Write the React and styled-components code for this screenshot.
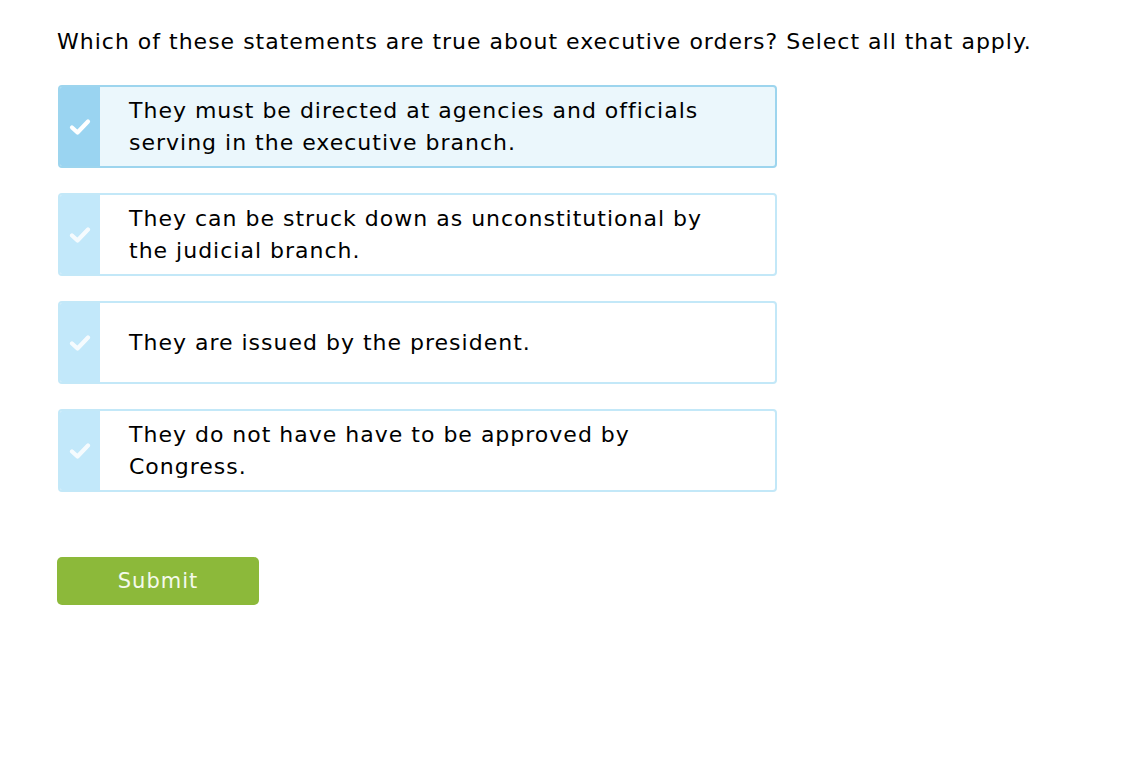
import React, { useState } from 'react';
import styled, { createGlobalStyle } from 'styled-components';

const GlobalStyle = createGlobalStyle`
  body {
    margin: 0;
    background: #fff;
    font-family: Verdana, "DejaVu Sans", sans-serif;
    color: #000;
  }
`;

const Page = styled.div`
  padding: 26px 0 0 57px;
`;

const Question = styled.h1`
  margin: 0 0 27px;
  font-size: 22px;
  letter-spacing: 1px;
  font-weight: normal;
  line-height: 32px;
`;

const List = styled.div`
  display: flex;
  flex-direction: column;
  gap: 25px;
  width: 719px;
  margin-left: 1px;
`;

const Choice = styled.div`
  display: flex;
  min-height: 83px;
  box-sizing: border-box;
  border: 2px solid ${p => (p.$selected ? '#9dd5ee' : '#c3e8f8')};
  border-radius: 4px;
  background: ${p => (p.$selected ? '#ebf7fc' : '#fff')};
  cursor: pointer;
  overflow: hidden;
`;

const Strip = styled.div`
  width: 40px;
  flex: none;
  display: flex;
  align-items: center;
  justify-content: center;
  background: ${p => (p.$selected ? '#9ad4f1' : '#c2e8fa')};
`;

const Label = styled.div`
  flex: 1;
  display: flex;
  align-items: center;
  padding: 6px 40px 6px 29px;
  font-size: 22px;
  letter-spacing: 1px;
  line-height: 32px;
`;

const SubmitButton = styled.button`
  margin-top: 65px;
  width: 202px;
  height: 48px;
  border: none;
  border-radius: 5px;
  background: #8cb93a;
  color: #f4f9ec;
  font-family: Verdana, "DejaVu Sans", sans-serif;
  font-size: 21px;
  letter-spacing: 1px;
  cursor: pointer;
`;

function Check({ faded }) {
  return (
    <svg width="22" height="18" viewBox="0 0 22 18" opacity={faded ? 0.85 : 1}>
      <path d="M3 9.5 L8.5 14.5 L19 3.5" fill="none" stroke="#fff" strokeWidth="4.2" strokeLinecap="round" strokeLinejoin="round" />
    </svg>
  );
}

const choices = [
  'They must be directed at agencies and officials serving in the executive branch.',
  'They can be struck down as unconstitutional by the judicial branch.',
  'They are issued by the president.',
  'They do not have have to be approved by Congress.',
];

export default function App() {
  const [selected, setSelected] = useState([0]);
  const toggle = i =>
    setSelected(s => (s.includes(i) ? s.filter(x => x !== i) : [...s, i]));

  return (
    <Page>
      <GlobalStyle />
      <Question>Which of these statements are true about executive orders? Select all that apply.</Question>
      <List>
        {choices.map((c, i) => (
          <Choice key={i} $selected={selected.includes(i)} onClick={() => toggle(i)}>
            <Strip $selected={selected.includes(i)}>
              <Check faded={!selected.includes(i)} />
            </Strip>
            <Label>{c}</Label>
          </Choice>
        ))}
      </List>
      <SubmitButton>Submit</SubmitButton>
    </Page>
  );
}
